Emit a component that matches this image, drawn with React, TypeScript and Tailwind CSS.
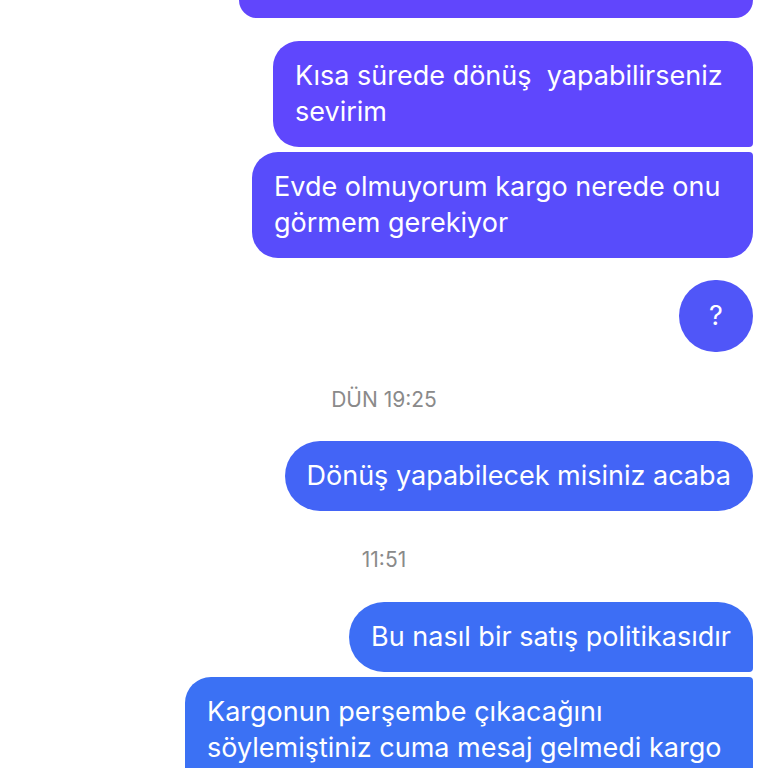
import React from "react";

const font = { fontFamily: "Inter, 'Noto Sans', sans-serif" };

const App: React.FC = () => {
  return (
    <div
      className="w-[768px] h-[768px] overflow-hidden bg-white flex flex-col items-end pr-[15px]"
      style={font}
    >
      {/* Previous bubble, cut off at top */}
      <div className="w-[514px] h-[18px] bg-[#6146fc] rounded-b-[24px] shrink-0" />

      {/* Group 1 */}
      <div className="mt-[23px] w-[480px] bg-[#5f47fd] rounded-[26px] rounded-br-[4px] px-[22px] py-[17px] text-white text-[27px] leading-[36px] shrink-0">
        Kısa sürede dönüş&nbsp; yapabilirseniz sevirim
      </div>
      <div className="mt-[5px] w-[501px] bg-[#584cfb] rounded-[26px] rounded-tr-[4px] px-[22px] py-[17px] text-white text-[27px] leading-[36px] shrink-0">
        Evde olmuyorum kargo nerede onu görmem gerekiyor
      </div>

      {/* Question mark */}
      <div className="mt-[22px] w-[74px] h-[72px] rounded-full bg-[#5056f8] flex items-center justify-center text-white text-[27px] shrink-0">
        ?
      </div>

      {/* Timestamp */}
      <div className="self-stretch mt-[36px] pl-[15px] text-center text-[#8a8a8a] text-[21px] leading-[24px] shrink-0">
        DÜN 19:25
      </div>

      <div className="mt-[29px] bg-[#4364f6] rounded-full px-[22px] py-[17px] text-white text-[27px] leading-[36px] whitespace-nowrap shrink-0">
        Dönüş yapabilecek misiniz acaba
      </div>

      <div className="self-stretch mt-[37px] pl-[15px] text-center text-[#8a8a8a] text-[21px] leading-[24px] shrink-0">
        11:51
      </div>

      {/* Group 2 */}
      <div className="mt-[30px] bg-[#3d6ef5] rounded-[36px] rounded-br-[4px] px-[22px] py-[17px] text-white text-[27px] leading-[36px] whitespace-nowrap shrink-0">
        Bu nasıl bir satış politikasıdır
      </div>
      <div className="mt-[5px] w-[568px] bg-[#3b71f4] rounded-[26px] rounded-tr-[4px] px-[22px] py-[17px] text-white text-[27px] leading-[36px] shrink-0">
        Kargonun perşembe çıkacağını söylemiştiniz cuma mesaj gelmedi kargo hala çıkmadı
      </div>
    </div>
  );
};

export default App;
